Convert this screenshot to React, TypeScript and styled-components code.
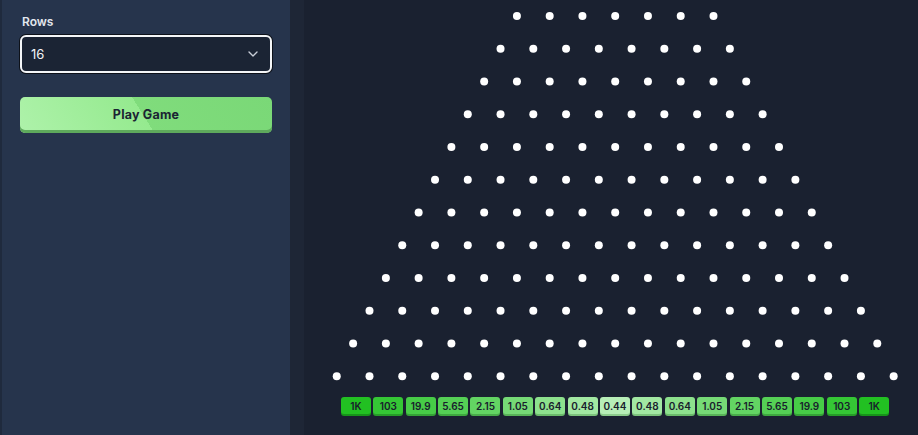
import React from "react";
import styled, { createGlobalStyle } from "styled-components";
import { ChevronDown } from "lucide-react";

const GlobalStyle = createGlobalStyle`
  html, body { margin: 0; padding: 0; background: #1a2130; }
  body { font-family: Inter, "Noto Sans", sans-serif; overflow: hidden; }
  * { box-sizing: border-box; }
`;

const Shell = styled.div`
  display: flex;
  width: 918px;
  height: 435px;
  background: #1a2130;
  overflow: hidden;
`;

const Sidebar = styled.aside`
  width: 304px;
  flex: none;
  display: flex;
  flex-direction: column;
  padding: 14px 18px 0 18px;
  background: #26344c;
  border-left: 2px solid #1f2a3d;
  border-right: 14px solid #1e2636;
`;

const Label = styled.label`
  display: block;
  margin-left: 2px;
  font-size: 12px;
  line-height: 16px;
  font-weight: 600;
  color: #e3e7ee;
`;

const SelectBox = styled.div`
  margin-top: 5px;
  height: 38px;
  display: flex;
  align-items: center;
  justify-content: space-between;
  padding: 0 9px 0 9px;
  background: #1b2434;
  border: 2px solid #f4f6f8;
  border-radius: 6px;
  box-shadow: 0 0 0 1px #0d1119;
  color: #f2f4f7;
  font-size: 13px;
  cursor: pointer;
`;

const Chevron = styled(ChevronDown)`
  color: #c9ced8;
`;

const PlayButton = styled.button`
  margin-top: 24px;
  height: 36px;
  padding: 0 0 2px;
  border: none;
  border-radius: 5px;
  background: linear-gradient(58deg, #aef2aa 0%, #95ea8f 49%, #80dc7c 49%, #7ad877 100%);
  box-shadow: inset 0 -3px 0 #5ea95c;
  font-family: Inter, "Noto Sans", sans-serif;
  font-size: 12.5px;
  font-weight: 700;
  letter-spacing: 0.2px;
  color: #1b2433;
  cursor: pointer;
`;

const Board = styled.main`
  flex: 1;
  display: flex;
  flex-direction: column;
  background: #1a2130;
`;

const PegField = styled.svg`
  display: block;
  flex: none;
`;

const BucketRow = styled.div`
  display: flex;
  justify-content: center;
  gap: 2.4px;
  padding-left: 8px;
  margin-top: 7px;
`;

const Bucket = styled.div<{ $bg: string; $shade: string }>`
  width: 30px;
  height: 17px;
  border-radius: 3px;
  background: ${(p) => p.$bg};
  box-shadow: 0 2px 0 ${(p) => p.$shade};
  display: flex;
  align-items: center;
  justify-content: center;
  font-size: 10px;
  font-weight: 600;
  color: #18202c;
`;

const BOARD_W = 614;
const CENTER_X = 311.2;
const SPACING = 32.76;
const ROW_H = 32.75;
const TOP_Y = 16;
const FIELD_H = 390;

const pegs: { x: number; y: number }[] = [];
for (let i = 0; i < 16; i++) {
  const n = 3 + i;
  const y = TOP_Y + (i - 4) * ROW_H;
  for (let j = 0; j < n; j++) {
    pegs.push({ x: CENTER_X + (j - (n - 1) / 2) * SPACING, y });
  }
}

const buckets: { label: string; bg: string; shade: string }[] = [
  { label: "1K", bg: "#22c022", shade: "#17941a" },
  { label: "103", bg: "#35c735", shade: "#269c28" },
  { label: "19.9", bg: "#47cc47", shade: "#34a236" },
  { label: "5.65", bg: "#55d055", shade: "#3ea83f" },
  { label: "2.15", bg: "#63d463", shade: "#49ac4a" },
  { label: "1.05", bg: "#76da76", shade: "#58b358" },
  { label: "0.64", bg: "#8de18d", shade: "#6aba6a" },
  { label: "0.48", bg: "#a2e8a2", shade: "#7cc27c" },
  { label: "0.44", bg: "#b7eeb7", shade: "#8ccb8c" },
];
const allBuckets = [...buckets, ...buckets.slice(0, 8).reverse()];

export default function App() {
  return (
    <>
      <GlobalStyle />
      <Shell>
        <Sidebar>
          <Label>Rows</Label>
          <SelectBox>
            <span>16</span>
            <Chevron size={16} strokeWidth={2} />
          </SelectBox>
          <PlayButton>Play Game</PlayButton>
        </Sidebar>
        <Board>
          <PegField width={BOARD_W} height={FIELD_H} viewBox={`0 0 ${BOARD_W} ${FIELD_H}`}>
            {pegs.map((p, i) => (
              <circle key={i} cx={p.x} cy={p.y} r={4} fill="#ffffff" />
            ))}
          </PegField>
          <BucketRow>
            {allBuckets.map((b, i) => (
              <Bucket key={i} $bg={b.bg} $shade={b.shade}>
                {b.label}
              </Bucket>
            ))}
          </BucketRow>
        </Board>
      </Shell>
    </>
  );
}
